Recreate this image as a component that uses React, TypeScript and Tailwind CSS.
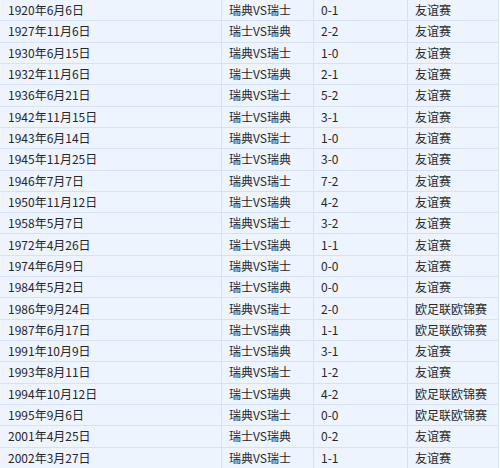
const rows: [string, string, string, string][] = [
  ['1920年6月6日', '瑞典VS瑞士', '0-1', '友谊赛'],
  ['1927年11月6日', '瑞士VS瑞典', '2-2', '友谊赛'],
  ['1930年6月15日', '瑞典VS瑞士', '1-0', '友谊赛'],
  ['1932年11月6日', '瑞士VS瑞典', '2-1', '友谊赛'],
  ['1936年6月21日', '瑞典VS瑞士', '5-2', '友谊赛'],
  ['1942年11月15日', '瑞士VS瑞典', '3-1', '友谊赛'],
  ['1943年6月14日', '瑞典VS瑞士', '1-0', '友谊赛'],
  ['1945年11月25日', '瑞士VS瑞典', '3-0', '友谊赛'],
  ['1946年7月7日', '瑞典VS瑞士', '7-2', '友谊赛'],
  ['1950年11月12日', '瑞士VS瑞典', '4-2', '友谊赛'],
  ['1958年5月7日', '瑞典VS瑞士', '3-2', '友谊赛'],
  ['1972年4月26日', '瑞士VS瑞典', '1-1', '友谊赛'],
  ['1974年6月9日', '瑞典VS瑞士', '0-0', '友谊赛'],
  ['1984年5月2日', '瑞士VS瑞典', '0-0', '友谊赛'],
  ['1986年9月24日', '瑞典VS瑞士', '2-0', '欧足联欧锦赛'],
  ['1987年6月17日', '瑞士VS瑞典', '1-1', '欧足联欧锦赛'],
  ['1991年10月9日', '瑞士VS瑞典', '3-1', '友谊赛'],
  ['1993年8月11日', '瑞典VS瑞士', '1-2', '友谊赛'],
  ['1994年10月12日', '瑞士VS瑞典', '4-2', '欧足联欧锦赛'],
  ['1995年9月6日', '瑞典VS瑞士', '0-0', '欧足联欧锦赛'],
  ['2001年4月25日', '瑞士VS瑞典', '0-2', '友谊赛'],
  ['2002年3月27日', '瑞典VS瑞士', '1-1', '友谊赛'],
]

export default function App() {
  return (
    <div
      className="w-[500px] h-[468px] overflow-hidden bg-white"
      style={{ fontFamily: '"Noto Sans CJK SC", "Liberation Sans", sans-serif' }}
    >
      <div className="flex flex-col h-[469px] w-[499px] bg-[#eef4fd] border-r border-[#d5e2f4] text-[12px] text-[#262626]">
        {rows.map((r, i) => (
          <div key={i} className="flex-1 flex border-b border-[#d5e2f4] min-h-0">
            <div className="w-[222px] pl-[8px] flex items-center border-r border-[#d5e2f4]">{r[0]}</div>
            <div className="w-[92px] pl-[7px] flex items-center border-r border-[#d5e2f4]">{r[1]}</div>
            <div className="w-[94px] pl-[7px] flex items-center border-r border-[#d5e2f4]">{r[2]}</div>
            <div className="flex-1 pl-[7px] flex items-center">{r[3]}</div>
          </div>
        ))}
      </div>
    </div>
  )
}
